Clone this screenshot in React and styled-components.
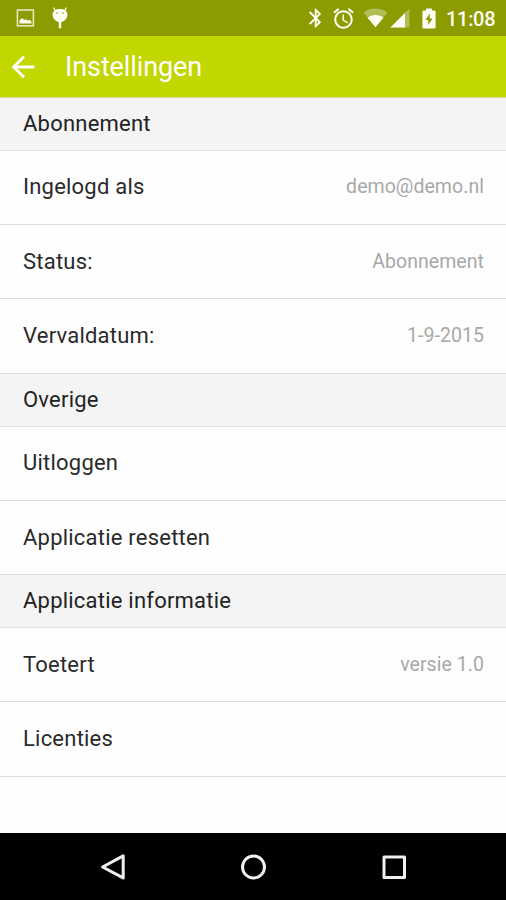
import React from "react"
import styled, { createGlobalStyle } from "styled-components"

const GlobalStyle = createGlobalStyle`
  * {
    box-sizing: border-box;
  }

  body {
    margin: 0;
    background: #fefefe;
    font-family: Roboto, "Liberation Sans", sans-serif;
  }
`

const Screen = styled.div`
  display: flex;
  flex-direction: column;
  width: 506px;
  height: 900px;
  overflow: hidden;
`

const StatusBar = styled.div`
  display: flex;
  align-items: center;
  justify-content: space-between;
  flex: none;
  height: 36px;
  padding: 0 10px 0 16px;
  background: #8b9b00;
  color: #fdfdf4;
`

const StatusGroup = styled.div`
  display: flex;
  align-items: center;
  gap: ${({ $gap }) => $gap}px;

  svg {
    display: block;
  }
`

const Clock = styled.span`
  width: 51px;
  padding: 2px 0 0 1px;
  font-size: 20px;
  font-weight: 500;
  line-height: 34px;
  letter-spacing: -0.3px;
  white-space: nowrap;
`

const AppBar = styled.header`
  display: flex;
  align-items: center;
  flex: none;
  height: 62px;
  padding: 1px 6px 0;
  border-bottom: 1px solid #d3d9a0;
  background: #c2d600;
  color: #fff;
`

const BackButton = styled.button`
  display: flex;
  padding: 0;
  border: 0;
  background: none;
  color: inherit;
`

const Title = styled.h1`
  margin: 0 0 0 25px;
  font-size: 27px;
  font-weight: 400;
  line-height: 32px;
  letter-spacing: -0.1px;
`

const Settings = styled.main`
  flex: 1;
  background: #fefefe;
`

const SectionTitle = styled.h2`
  display: flex;
  align-items: center;
  height: 52.7px;
  margin: 0;
  padding: 0 23px 0.6px;
  border-bottom: 1px solid #e2e2e2;
  background: #f4f4f4;
  color: #222;
  font-size: 22px;
  font-weight: 400;
  letter-spacing: 0.22px;
`

const Row = styled.div`
  display: flex;
  align-items: center;
  justify-content: space-between;
  height: 74.4px;
  padding: 0 22px 1.2px 23px;
  border-bottom: 1px solid #dedede;
`

const Label = styled.span`
  color: #2a2a2a;
  font-size: 22px;
  letter-spacing: 0.22px;
`

const Value = styled.span`
  color: #a8a8a8;
  font-size: 19.5px;
  letter-spacing: 0.05px;
`

const NavBar = styled.nav`
  display: flex;
  align-items: center;
  justify-content: space-between;
  flex: none;
  height: 67px;
  padding: 0 98px;
  background: #000;
  color: #f0f0f0;
`

const sections = [
  {
    title: "Abonnement",
    rows: [
      { label: "Ingelogd als", value: "demo@demo.nl" },
      { label: "Status:", value: "Abonnement" },
      { label: "Vervaldatum:", value: "1-9-2015" },
    ],
  },
  {
    title: "Overige",
    rows: [{ label: "Uitloggen" }, { label: "Applicatie resetten" }],
  },
  {
    title: "Applicatie informatie",
    rows: [{ label: "Toetert", value: "versie 1.0" }, { label: "Licenties" }],
  },
]

const PictureIcon = () => (
  <svg width="19" height="18" viewBox="0 0 19 18" fill="none">
    <rect x="1.4" y="1" width="16" height="15.8" stroke="#e6e9c4" strokeWidth="1.6" />
    <path d="M3.5 14.5v-3l2.5-2.4 2.3 2 1.4-.8 1.6 1.3 2.2-.6 2 1.6v1.9z" fill="currentColor" />
  </svg>
)

const AndroidIcon = () => (
  <svg width="16" height="22" viewBox="0 0 16 22" fill="none">
    <path d="M3 3.4 1.9 1M13 3.4 14.1 1" stroke="currentColor" strokeWidth="1.3" strokeLinecap="round" />
    <path d="M8 2c4.3 0 7.4 2 7.4 5.6 0 4-3.2 7.6-7.4 7.6S.6 11.6.6 7.6C.6 4 3.7 2 8 2z" fill="currentColor" />
    <path d="M8 14v6.2" stroke="currentColor" strokeWidth="2.4" strokeLinecap="round" />
    <circle cx="5" cy="6" r=".8" fill="#8b9b00" />
    <circle cx="11" cy="6" r=".8" fill="#8b9b00" />
  </svg>
)

const BluetoothIcon = () => (
  <svg width="15" height="20" viewBox="4.3 1.6 15 20.8" fill="currentColor">
    <path d="M17.71 7.71 12 2h-1v7.59L6.41 5 5 6.41 10.59 12 5 17.59 6.41 19 11 14.41V22h1l5.71-5.71-4.3-4.29 4.3-4.29zM13 5.83l1.88 1.88L13 9.59V5.83zm1.88 10.46L13 18.17v-3.76l1.88 1.88z" />
  </svg>
)

const AlarmIcon = () => (
  <svg width="21" height="21" viewBox="2 1.8 20 20.4" fill="currentColor">
    <path d="m22 5.72-4.6-3.86-1.29 1.53 4.6 3.86L22 5.72zM7.88 3.39 6.6 1.86 2 5.71l1.29 1.53 4.59-3.85zM12.5 8H11v6l4.75 2.85.75-1.23-4-2.37V8zM12 4c-4.97 0-9 4.03-9 9s4.02 9 9 9a9 9 0 0 0 0-18zm0 16c-3.87 0-7-3.13-7-7s3.13-7 7-7 7 3.13 7 7-3.13 7-7 7z" />
  </svg>
)

const WifiIcon = () => (
  <svg width="25" height="20" viewBox="0 0 25 20" fill="currentColor">
    <path d="M12.5 19.3.4 4.5C3.8 2 8 .6 12.5.6S21.2 2 24.6 4.5z" opacity=".35" />
    <path d="M12.5 19.3 4.6 9.7c2.2-1.7 5-2.6 7.9-2.6s5.7.9 7.9 2.6z" />
  </svg>
)

const SignalIcon = () => (
  <svg width="20" height="20" viewBox="0 0 20 20" fill="currentColor">
    <path d="M.4 19.4 19.4.5v18.9z" opacity=".35" />
    <path d="M.4 19.4 15 4.9v14.5z" />
  </svg>
)

const BatteryIcon = () => (
  <svg width="16" height="21" viewBox="-2 0 16 21" fill="currentColor">
    <path d="M12.3 2.4H9.9V.4H4.1v2H1.7C1 2.4.4 3 .4 3.7v15.5c0 .8.6 1.4 1.3 1.4h10.6c.7 0 1.3-.6 1.3-1.4V3.7c0-.7-.6-1.3-1.3-1.3z" />
    <path d="M6.2 17v-5H3.4l4.4-6.4v4.8h2.8z" fill="#8b9b00" />
  </svg>
)

const ArrowBackIcon = () => (
  <svg width="34" height="34" viewBox="0 0 24 24" fill="currentColor">
    <path d="M20 11H7.83l5.59-5.59L12 4l-8 8 8 8 1.41-1.41L7.83 13H20v-2z" />
  </svg>
)

const NavIcon = ({ children }) => (
  <svg
    width="30"
    height="30"
    viewBox="0 0 30 30"
    fill="none"
    stroke="currentColor"
    strokeWidth="3"
    strokeLinejoin="round"
  >
    {children}
  </svg>
)

const SettingsRow = ({ label, value }) => (
  <Row>
    <Label>{label}</Label>
    {value && <Value>{value}</Value>}
  </Row>
)

const App = () => {
  return (
    <>
      <GlobalStyle />
      <Screen>
        <StatusBar>
          <StatusGroup $gap={17}>
            <PictureIcon />
            <AndroidIcon />
          </StatusGroup>
          <StatusGroup $gap={9.5}>
            <BluetoothIcon />
            <AlarmIcon />
            <StatusGroup $gap={2}>
              <WifiIcon />
              <SignalIcon />
            </StatusGroup>
            <BatteryIcon />
            <Clock>11:08</Clock>
          </StatusGroup>
        </StatusBar>
        <AppBar>
          <BackButton aria-label="Terug">
            <ArrowBackIcon />
          </BackButton>
          <Title>Instellingen</Title>
        </AppBar>
        <Settings>
          {sections.map(({ title, rows }) => (
            <section key={title}>
              <SectionTitle>{title}</SectionTitle>
              {rows.map(row => (
                <SettingsRow key={row.label} {...row} />
              ))}
            </section>
          ))}
        </Settings>
        <NavBar>
          <NavIcon>
            <path d="M25.2 3.9v22L4.6 15z" />
          </NavIcon>
          <NavIcon>
            <circle cx="15.5" cy="15" r="11" />
          </NavIcon>
          <NavIcon>
            <rect x="6" y="5" width="20.5" height="20.5" />
          </NavIcon>
        </NavBar>
      </Screen>
    </>
  )
}

export default App
